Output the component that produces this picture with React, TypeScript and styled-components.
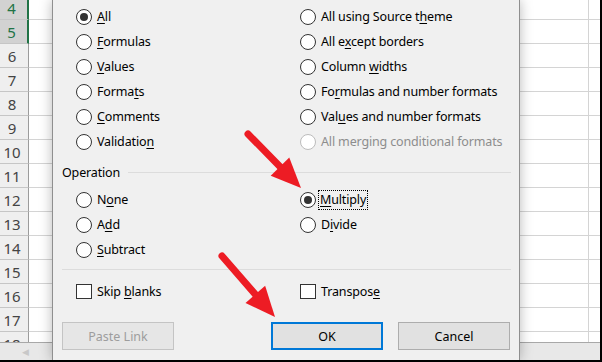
import React from "react";
import styled, { createGlobalStyle } from "styled-components";

const GlobalStyle = createGlobalStyle`
  html, body {
    margin: 0;
    padding: 0;
    background: #fff;
  }
  body {
    font-family: "Noto Sans", "Open Sans", sans-serif;
  }
`;

const Frame = styled.div`
  position: relative;
  width: 600px;
  height: 360px;
  border-right: 2px solid #000;
  border-bottom: 2px solid #000;
  overflow: hidden;
  display: flex;
  flex-direction: column;
  background: #fff;
`;

const Sheet = styled.div`
  flex: 1;
  overflow: hidden;
`;

const Rows = styled.div`
  margin-top: -4px;
`;

const Row = styled.div`
  display: grid;
  grid-template-columns: 29px 560px 1fr;
  height: 24px;
`;

const RowHeader = styled.div<{ $selected?: boolean }>`
  box-sizing: border-box;
  display: flex;
  align-items: center;
  justify-content: center;
  padding-right: 4px;
  border-right: ${(p) => (p.$selected ? "2px solid #217346" : "1px solid #9b9b9b")};
  border-bottom: 1px solid #c6c6c6;
  background: ${(p) => (p.$selected ? "#d2d2d2" : "#efefef")};
  color: ${(p) => (p.$selected ? "#217346" : "#444")};
  font-size: 15px;
`;

const Cell = styled.div<{ $edge?: boolean }>`
  box-sizing: border-box;
  border-bottom: 1px solid #d4d4d4;
  border-right: ${(p) => (p.$edge ? "1px solid #d4d4d4" : "none")};
`;

const ScrollBar = styled.div`
  height: 18px;
  box-sizing: border-box;
  border-top: 1px solid #a8a8a8;
  background: #e8e8e8;
  display: flex;
  align-items: center;
  padding-left: 22px;
  color: #c8c8c8;
  font-size: 9px;
`;

const Dialog = styled.div`
  position: absolute;
  left: 52px;
  top: 0;
  bottom: 0;
  width: 468px;
  box-sizing: border-box;
  background: #f0f0f0;
  border-left: 1px solid #8f8f8f;
  border-right: 1px solid #8f8f8f;
  box-shadow: 0 0 12px rgba(0, 0, 0, 0.28);
  padding-top: 4px;
  color: #000;
  font-size: 12.5px;
  letter-spacing: -0.15px;
  display: flex;
  flex-direction: column;
`;

const OptionGrid = styled.div<{ $rows: number }>`
  display: grid;
  grid-template-columns: 224px 1fr;
  grid-template-rows: repeat(${(p) => p.$rows}, 25px);
  grid-auto-flow: column;
  padding-left: 23px;
`;

const Option = styled.div<{ $disabled?: boolean }>`
  display: flex;
  align-items: center;
  gap: 4px;
  white-space: nowrap;
  color: ${(p) => (p.$disabled ? "#8d8d8d" : "#000")};
`;

const RadioCircle = styled.span<{ $checked?: boolean; $disabled?: boolean }>`
  box-sizing: border-box;
  width: 16px;
  height: 16px;
  flex-shrink: 0;
  border-radius: 50%;
  border: 1px solid ${(p) => (p.$disabled ? "#bcbcbc" : "#333")};
  background: #fff;
  display: flex;
  align-items: center;
  justify-content: center;
  &::after {
    content: "";
    width: 8px;
    height: 8px;
    border-radius: 50%;
    background: #333;
    display: ${(p) => (p.$checked ? "block" : "none")};
  }
`;

const CheckBox = styled.span`
  box-sizing: border-box;
  width: 16px;
  height: 15px;
  flex-shrink: 0;
  border: 1px solid #333;
  background: #fff;
`;

const Label = styled.span<{ $focused?: boolean }>`
  line-height: 18px;
  padding: 0 1px;
  margin-left: ${(p) => (p.$focused ? "-1px" : "0")};
  outline: ${(p) => (p.$focused ? "1px dotted #000" : "none")};
  outline-offset: 0;
`;

const Key = styled.span`
  text-decoration: underline;
  text-underline-offset: 2px;
`;

const GroupTitle = styled.div`
  display: flex;
  align-items: center;
  gap: 8px;
  height: 20px;
  margin: 8px 8px 5px 9px;
  &::after {
    content: "";
    flex: 1;
    height: 1px;
    background: #dcdcdc;
  }
`;

const Divider = styled.div`
  height: 1px;
  background: #dcdcdc;
  margin: 7px 8px 0 9px;
`;

const CheckRow = styled(OptionGrid)`
  margin-top: 9px;
`;

const ButtonRow = styled.div`
  display: flex;
  gap: 15px;
  margin-top: 18px;
  padding: 0 9px;
`;

const Button = styled.button<{ $primary?: boolean }>`
  box-sizing: border-box;
  width: 112px;
  height: 28px;
  font: inherit;
  color: #000;
  background: #e1e1e1;
  border: ${(p) => (p.$primary ? "2px solid #0078d7" : "1px solid #adadad")};
  padding: 0;
  &:disabled {
    background: #e6e6e6;
    border-color: #c4c4c4;
    color: #9d9d9d;
  }
`;

const Spacer = styled.div`
  flex: 1;
`;

const ArrowLayer = styled.svg`
  position: absolute;
  inset: 0;
  pointer-events: none;
`;

type Item = {
  text: [string, string, string];
  checked?: boolean;
  disabled?: boolean;
  focused?: boolean;
};

const pasteItems: Item[] = [
  { text: ["", "A", "ll"], checked: true },
  { text: ["", "F", "ormulas"] },
  { text: ["", "V", "alues"] },
  { text: ["Forma", "t", "s"] },
  { text: ["", "C", "omments"] },
  { text: ["Validatio", "n", ""] },
  { text: ["All using Source t", "h", "eme"] },
  { text: ["All e", "x", "cept borders"] },
  { text: ["Column ", "w", "idths"] },
  { text: ["Fo", "r", "mulas and number formats"] },
  { text: ["Val", "u", "es and number formats"] },
  { text: ["All merging conditional formats", "", ""], disabled: true },
];

const operationItems: Item[] = [
  { text: ["N", "o", "ne"] },
  { text: ["A", "d", "d"] },
  { text: ["", "S", "ubtract"] },
  { text: ["", "M", "ultiply"], checked: true, focused: true },
  { text: ["D", "i", "vide"] },
];

const rowNumbers = [4, 5, 6, 7, 8, 9, 10, 11, 12, 13, 14, 15, 16, 17, 18];

const LabelText = ({ item }: { item: Item }) => (
  <Label $focused={item.focused}>
    {item.text[0]}
    {item.text[1] && <Key>{item.text[1]}</Key>}
    {item.text[2]}
  </Label>
);

const Radio = ({ item }: { item: Item }) => (
  <Option $disabled={item.disabled}>
    <RadioCircle $checked={item.checked} $disabled={item.disabled} />
    <LabelText item={item} />
  </Option>
);

const Check = ({ item }: { item: Item }) => (
  <Option>
    <CheckBox />
    <LabelText item={item} />
  </Option>
);

// red callout arrow: round-capped shaft plus a triangular head
const Arrow = ({ x1, y1, x2, y2 }: { x1: number; y1: number; x2: number; y2: number }) => {
  const dx = x2 - x1;
  const dy = y2 - y1;
  const len = Math.hypot(dx, dy);
  const ux = dx / len;
  const uy = dy / len;
  const headLen = 30;
  const half = 13;
  const bx = x2 - ux * headLen;
  const by = y2 - uy * headLen;
  const pts = [
    [x2, y2],
    [bx - uy * half, by + ux * half],
    [bx + uy * half, by - ux * half],
  ]
    .map((p) => p.join(","))
    .join(" ");
  return (
    <g>
      <line
        x1={x1}
        y1={y1}
        x2={bx + ux * 4}
        y2={by + uy * 4}
        stroke="#ed1c24"
        strokeWidth={7}
        strokeLinecap="round"
      />
      <polygon points={pts} fill="#ed1c24" />
    </g>
  );
};

const App = () => {
  return (
    <>
      <GlobalStyle />
      <Frame>
        <Sheet>
          <Rows>
            {rowNumbers.map((n) => (
              <Row key={n}>
                <RowHeader $selected={n === 4 || n === 5}>{n}</RowHeader>
                <Cell $edge />
                <Cell />
              </Row>
            ))}
          </Rows>
        </Sheet>
        <ScrollBar>◀</ScrollBar>

        <Dialog>
          <OptionGrid $rows={6}>
            {pasteItems.map((item, i) => (
              <Radio key={i} item={item} />
            ))}
          </OptionGrid>

          <GroupTitle>Operation</GroupTitle>
          <OptionGrid $rows={3}>
            {operationItems.map((item, i) => (
              <Radio key={i} item={item} />
            ))}
          </OptionGrid>

          <Divider />
          <CheckRow $rows={1}>
            <Check item={{ text: ["Skip ", "b", "lanks"] }} />
            <Check item={{ text: ["Transpos", "e", ""] }} />
          </CheckRow>

          <ButtonRow>
            <Button disabled>Paste Link</Button>
            <Spacer />
            <Button $primary>OK</Button>
            <Button>Cancel</Button>
          </ButtonRow>
        </Dialog>

        <ArrowLayer width={600} height={360}>
          <Arrow x1={248} y1={134} x2={301} y2={188} />
          <Arrow x1={222} y1={256} x2={275} y2={317} />
        </ArrowLayer>
      </Frame>
    </>
  );
};

export default App;
